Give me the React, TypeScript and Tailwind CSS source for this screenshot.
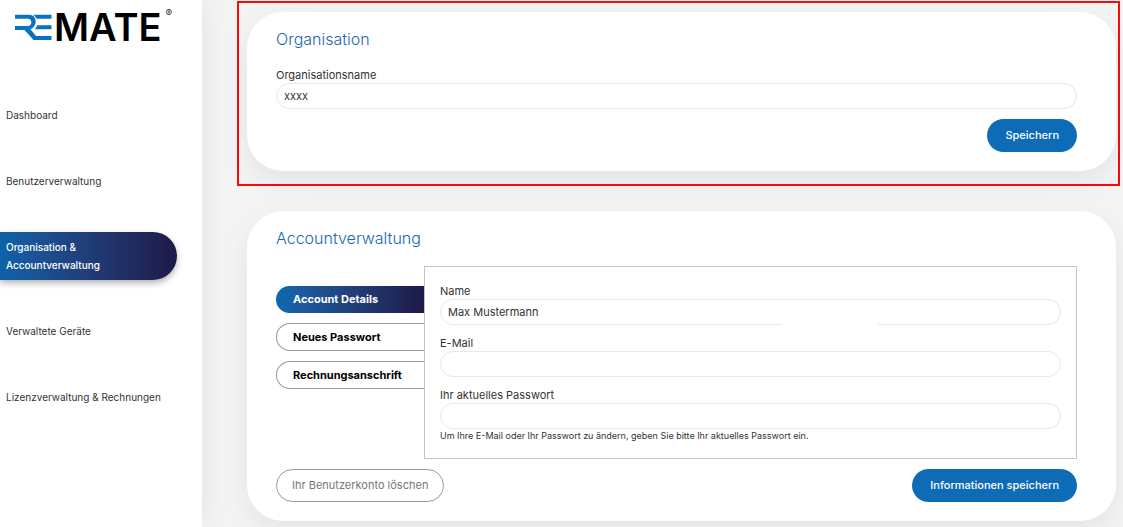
import { useState, type ReactNode } from "react";
import { clsx } from "clsx";

const NAV = [
  "Dashboard",
  "Benutzerverwaltung",
  "Organisation & Accountverwaltung",
  "Verwaltete Geräte",
  "Lizenzverwaltung & Rechnungen",
];

const TABS = ["Account Details", "Neues Passwort", "Rechnungsanschrift"];

function Logo() {
  return (
    <div className="flex items-start pl-[15px] text-black">
      {/* RE monogram */}
      <svg width="37" height="26" viewBox="0 0 37 26" aria-label="RE" role="img" className="shrink-0">
        <g fill="#0a72bf">
          <path d="M0 .8 H14 C22.500 .8 22.800 12.500 15.500 15.200 L21 22 H36.500 V26 H18.500 L9.500 16 H0 V12 H13 C17.500 12 17.500 4.800 13 4.800 H0 Z" />
          <path d="M18 .8 H36.500 V4.800 H21.500 C20.800 3 19.600 1.600 18 .8 Z" />
          <path d="M22 11.300 H36.500 V15.300 H19.500 C21 14.300 21.800 13 22 11.300 Z" />
        </g>
      </svg>
      <span className="ml-[2px] text-[38px] leading-[26px] font-semibold">MATE</span>
      <span className="-mt-[7px] ml-1 text-[10px] leading-[12px] text-[#333]">®</span>
    </div>
  );
}

function Sidebar() {
  return (
    <aside className="z-10 w-[202px] shrink-0 bg-white pt-[14px] shadow-[0_0_30px_rgba(0,0,0,0.08)]">
      <Logo />
      <nav className="mt-[60px] flex flex-col gap-9">
        {NAV.map((label, i) => (
          <a
            key={label}
            href="#"
            aria-current={i === 2 ? "page" : undefined}
            className={clsx(
              "mr-[25px] py-[6px] pl-[6px] text-[10px] leading-[18px]",
              i === 2
                ? "rounded-r-full bg-linear-to-r from-[#0d62a9] to-[#1d1a48] pr-12 font-medium text-white shadow-[0_3px_6px_rgba(0,0,0,0.3)]"
                : "whitespace-nowrap text-[#333]",
            )}
          >
            {label}
          </a>
        ))}
      </nav>
    </aside>
  );
}

function Card({ title, children, className }: { title: string; children: ReactNode; className?: string }) {
  return (
    <section
      className={clsx(
        "rounded-[36px] bg-white pt-[15px] pr-[39px] pb-[19px] pl-[29px] shadow-[0_10px_30px_rgba(0,0,0,0.07)]",
        className,
      )}
    >
      <h2 className="mb-4 text-[16px] leading-6 font-light text-[#1b66b1]">{title}</h2>
      {children}
    </section>
  );
}

function Field({
  id,
  label,
  value,
  type = "text",
  children,
}: {
  id: string;
  label: string;
  value?: string;
  type?: string;
  children?: ReactNode;
}) {
  return (
    <div className="relative flex flex-col">
      <label htmlFor={id} className="text-[11px] leading-4 text-[#333]">
        {label}
      </label>
      <input
        id={id}
        type={type}
        defaultValue={value}
        className="h-[26px] w-full rounded-full border border-[#e8e8e8] bg-white px-[7px] text-[11px] text-[#333] outline-none"
      />
      {children}
    </div>
  );
}

function PrimaryButton({ children }: { children: ReactNode }) {
  return (
    <button type="button" className="h-[33px] rounded-full bg-[#0d6cb5] px-[18px] text-[11px] font-medium text-white">
      {children}
    </button>
  );
}

export default function App() {
  const [tab, setTab] = useState(0);

  return (
    <div className="flex min-h-screen bg-[#f4f4f4] font-['Inter',sans-serif]">
      <Sidebar />
      <main className="min-w-0 flex-1 pt-px pr-[3px] pb-[6px] pl-[35px]">
        <div className="border-2 border-[#f80c0c] pt-[9px] pr-[2px] pb-[13px] pl-2">
          <Card title="Organisation">
            <Field id="org" label="Organisationsname" value="xxxx" />
            <div className="mt-[10px] flex justify-end">
              <PrimaryButton>Speichern</PrimaryButton>
            </div>
          </Card>
        </div>

        <Card title="Accountverwaltung" className="mt-[25px] mr-1 ml-[10px]">
          <div className="flex">
            <div role="tablist" className="flex w-[148px] shrink-0 flex-col gap-[10px] pt-5">
              {TABS.map((label, i) => (
                <button
                  key={label}
                  type="button"
                  role="tab"
                  aria-selected={i === tab}
                  onClick={() => setTab(i)}
                  className={clsx(
                    "rounded-l-full border pl-4 text-left text-[11px] font-bold",
                    i === tab
                      ? "h-[27px] border-transparent bg-linear-to-r from-[#0d69b1] to-[#1d1a48] bg-origin-border text-white"
                      : "h-7 border-r-0 border-[#999] bg-white text-black",
                  )}
                >
                  {label}
                </button>
              ))}
            </div>
            <div role="tabpanel" className="flex flex-1 flex-col gap-[10px] border border-[#c4c4c4] px-[15px] py-4">
              <Field id="name" label="Name" value="Max Mustermann">
                <span className="absolute bottom-0 left-[55%] h-[2px] w-24 bg-white" />
              </Field>
              <Field id="email" label="E-Mail" type="email" />
              <Field id="password" label="Ihr aktuelles Passwort" type="password">
                <small className="text-[9px] leading-[13px] text-[#333]">
                  Um Ihre E-Mail oder Ihr Passwort zu ändern, geben Sie bitte Ihr aktuelles Passwort ein.
                </small>
              </Field>
            </div>
          </div>
          <div className="mt-[10px] flex justify-between">
            <button
              type="button"
              className="h-[33px] rounded-full border border-[#999] px-[15px] text-[11px] text-[#777]"
            >
              Ihr Benutzerkonto löschen
            </button>
            <PrimaryButton>Informationen speichern</PrimaryButton>
          </div>
        </Card>
      </main>
    </div>
  );
}
